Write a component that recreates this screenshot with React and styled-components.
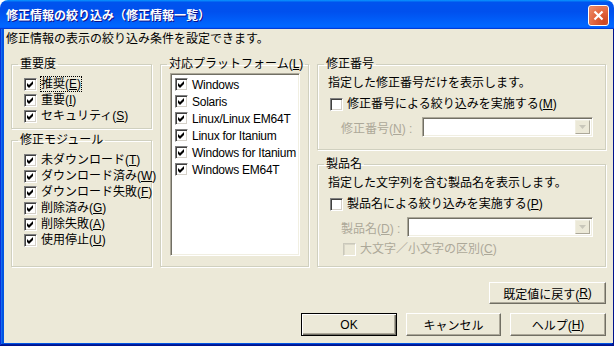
import styled, { createGlobalStyle, css } from "styled-components"

const GlobalStyle = createGlobalStyle`
  html, body {
    margin: 0;
    padding: 0;
    background: #fff;
  }
  body {
    font-family: "Liberation Sans", "Noto Sans CJK JP", sans-serif;
    font-size: 12px;
    color: #000;
  }
`

const sunken = css`
  border: 1px solid;
  border-color: #aca899 #fff #fff #aca899;
  box-shadow: inset 1px 1px #716f64, inset -1px -1px #f1efe2;
`

const Window = styled.div`
  width: 614px;
  height: 346px;
  display: flex;
  flex-direction: column;
  border-radius: 8px 8px 0 0;
  overflow: hidden;
`

const TitleBar = styled.div`
  height: 29px;
  flex: none;
  display: flex;
  justify-content: space-between;
  padding: 0 5px 0 6px;
  background: linear-gradient(180deg, #0997ff, #0053ee 8%, #0050ee 40%, #06f 88%, #06f 93%, #005bff 95%, #003dd7 96%, #003dd7);
`

const Title = styled.div`
  font-family: "Noto Sans CJK JP", sans-serif;
  font-weight: bold;
  font-size: 12px;
  line-height: 29px;
  color: #fff;
  text-shadow: 1px 1px #0f1089;
`

const CloseButton = styled.div`
  width: 21px;
  height: 21px;
  margin-top: 5px;
  box-sizing: border-box;
  border: 1px solid #fff;
  border-radius: 3px;
  background: radial-gradient(circle at 80% 85%, #cc4622, #e1633c 45%, #ec8a66 90%);
  box-shadow: inset 0 0 1px #b03a16;
  display: flex;
  align-items: center;
  justify-content: center;
`

const Frame = styled.div`
  flex: 1;
  display: flex;
  padding: 0 4px 3px 4px;
  background: #0054e3;
  box-shadow: inset -1px -1px #00138c, inset 1px 0 #0831d9, inset -2px -2px #001ea0, inset 2px 0 #166aee;
`

const Body = styled.div`
  flex: 1;
  background: #ece9d8;
  display: flex;
  flex-direction: column;
  padding-top: 3px;
`

const Desc = styled.div`
  line-height: 14px;
  padding: 0 ${p => p.$px ?? 2}px;
  white-space: nowrap;
`

const Columns = styled.div`
  display: grid;
  grid-template-columns: 141px 149px 289px;
  column-gap: 8px;
  margin-top: 11px;
  padding: 0 7px;
  height: 210px;
`

const Stack = styled.div`
  display: flex;
  flex-direction: column;
  gap: ${p => p.$gap}px;
`

const Group = styled.fieldset`
  margin: 0;
  padding: 0;
  min-width: 0;
  box-sizing: border-box;
  height: ${p => p.$h}px;
  border: 1px solid #d0d0bf;
  box-shadow: inset 1px 1px #fff, 1px 1px #fff;
`

const Legend = styled.legend`
  margin-left: 6px;
  padding: 0 2px;
  line-height: 14px;
  font-size: 12px;
`

const GroupInner = styled.div`
  padding: ${p => p.$pad};
  display: flex;
  flex-direction: column;
`

const Row = styled.label`
  display: flex;
  align-items: center;
  height: ${p => p.$h || 16}px;
  margin-top: ${p => p.$mt || 0}px;
  padding-left: ${p => p.$pl || 0}px;
  color: ${p => (p.$disabled ? "#aca899" : "#000")};
  white-space: nowrap;
`

const Box = styled.span`
  width: 13px;
  height: 13px;
  flex: none;
  box-sizing: border-box;
  background: ${p => (p.$disabled ? "#ece9d8" : "#fff")};
  border: 1px solid;
  border-color: ${p => (p.$disabled ? "#cac8bb #fff #fff #cac8bb" : "#808080 #fff #fff #808080")};
  box-shadow: ${p =>
    p.$disabled ? "inset 1px 1px #d8d5c6" : "inset 1px 1px #404040, inset -1px -1px #d4d0c8"};
  margin-right: 4px;
  display: flex;
`

const LabelText = styled.span`
  line-height: 14px;
  letter-spacing: ${p => p.$ls || 0}px;
  outline: ${p => (p.$focus ? "1px dotted #000" : "none")};
`

const ListBox = styled.div`
  width: 130px;
  height: 183px;
  box-sizing: border-box;
  background: #fff;
  padding: 2px 2px;
  ${sunken}
`

const Combo = styled.div`
  width: ${p => p.$w}px;
  height: 20px;
  box-sizing: border-box;
  background: #fff;
  display: flex;
  justify-content: flex-end;
  padding: 2px;
  ${sunken}
`

const ComboArrow = styled.div`
  width: 15px;
  height: 14px;
  box-sizing: border-box;
  background: #ece9d8;
  border: 1px solid;
  border-color: #f1efe2 #aca899 #aca899 #f1efe2;
  display: flex;
  align-items: center;
  justify-content: center;
`

const FieldRow = styled.div`
  display: flex;
  align-items: center;
  justify-content: space-between;
  height: 20px;
  margin-top: ${p => p.$mt}px;
  padding: 0 12px 0 23px;
  color: #aca899;
  white-space: nowrap;
`

const ButtonRow = styled.div`
  display: flex;
  justify-content: flex-end;
  gap: 9px;
  padding-right: 7px;
  margin-top: ${p => p.$mt}px;
`

const Button = styled.div`
  width: ${p => p.$w}px;
  height: ${p => p.$h}px;
  box-sizing: border-box;
  display: flex;
  align-items: center;
  justify-content: center;
  background: #ece9d8;
  white-space: nowrap;
  ${p =>
    p.$default
      ? css`
          border: 1px solid #000;
          box-shadow: inset 1px 1px #fff, inset -1px -1px #716f64, inset -2px -2px #aca899;
        `
      : css`
          border: 1px solid;
          border-color: #fff #716f64 #716f64 #fff;
          box-shadow: inset -1px -1px #aca899;
        `}
`

const Check = () => (
  <svg width="11" height="11" viewBox="0 0 11 11">
    <polygon points="2,4 4,6 8,2 8,5 4,9 2,7" fill="#000" />
  </svg>
)

const CheckItem = ({ label, acc, checked = true, disabled, focus, ...props }) => (
  <Row $disabled={disabled} {...props}>
    <Box $disabled={disabled}>{checked && <Check />}</Box>
    <LabelText $focus={focus}>
      {label}(<u>{acc}</u>)
    </LabelText>
  </Row>
)

const Arrow = () => (
  <svg width="7" height="4" viewBox="0 0 7 4">
    <polygon points="0,0 7,0 3.5,4" fill="#c9c7ba" />
  </svg>
)

const platforms = ["Windows", "Solaris", "Linux/Linux EM64T", "Linux for Itanium", "Windows for Itanium", "Windows EM64T"]

const PlainItem = ({ text }) => (
  <Row $h={17} $pl={2}>
    <Box>
      <Check />
    </Box>
    <LabelText $ls={-0.25}>{text}</LabelText>
  </Row>
)

export default function App() {
  return (
    <>
      <GlobalStyle />
      <Window>
        <TitleBar>
          <Title>修正情報の絞り込み（修正情報一覧）</Title>
          <CloseButton>
            <svg width="11" height="11" viewBox="0 0 11 11">
              <path d="M1.5 1.5 L9.5 9.5 M9.5 1.5 L1.5 9.5" stroke="#fff" strokeWidth="2.2" />
            </svg>
          </CloseButton>
        </TitleBar>
        <Frame>
          <Body>
            <Desc>修正情報の表示の絞り込み条件を設定できます。</Desc>
            <Columns>
              <Stack $gap={4}>
                <Group $h={72}>
                  <Legend>重要度</Legend>
                  <GroupInner $pad="5px 0 0 12px">
                    <CheckItem label="推奨" acc="E" focus />
                    <CheckItem label="重要" acc="I" />
                    <CheckItem label="セキュリティ" acc="S" />
                  </GroupInner>
                </Group>
                <Group $h={134}>
                  <Legend>修正モジュール</Legend>
                  <GroupInner $pad="5px 0 0 12px">
                    <CheckItem label="未ダウンロード" acc="T" />
                    <CheckItem label="ダウンロード済み" acc="W" />
                    <CheckItem label="ダウンロード失敗" acc="F" />
                    <CheckItem label="削除済み" acc="G" />
                    <CheckItem label="削除失敗" acc="A" />
                    <CheckItem label="使用停止" acc="U" />
                  </GroupInner>
                </Group>
              </Stack>
              <Group $h={210}>
                <Legend>
                  対応プラットフォーム(<u>L</u>)
                </Legend>
                <GroupInner $pad="2px 0 0 9px">
                  <ListBox>
                    {platforms.map(p => (
                      <PlainItem key={p} text={p} />
                    ))}
                  </ListBox>
                </GroupInner>
              </Group>
              <Stack $gap={7}>
                <Group $h={93}>
                  <Legend>修正番号</Legend>
                  <GroupInner $pad="5px 0 0 10px">
                    <Desc $px={0}>指定した修正番号だけを表示します。</Desc>
                    <CheckItem label="修正番号による絞り込みを実施する" acc="M" checked={false} $mt={6} $pl={2} />
                  </GroupInner>
                  <FieldRow $mt={5}>
                    <span>
                      修正番号(<u>N</u>) :
                    </span>
                    <Combo $w={171}>
                      <ComboArrow>
                        <Arrow />
                      </ComboArrow>
                    </Combo>
                  </FieldRow>
                </Group>
                <Group $h={110}>
                  <Legend>製品名</Legend>
                  <GroupInner $pad="5px 0 0 10px">
                    <Desc $px={0}>指定した文字列を含む製品名を表示します。</Desc>
                    <CheckItem label="製品名による絞り込みを実施する" acc="P" checked={false} $mt={6} $pl={2} />
                  </GroupInner>
                  <FieldRow $mt={5}>
                    <span>
                      製品名(<u>D</u>) :
                    </span>
                    <Combo $w={186}>
                      <ComboArrow>
                        <Arrow />
                      </ComboArrow>
                    </Combo>
                  </FieldRow>
                  <GroupInner $pad="0 0 0 10px">
                    <CheckItem label="大文字／小文字の区別" acc="C" checked={false} disabled $mt={4} $pl={15} />
                  </GroupInner>
                </Group>
              </Stack>
            </Columns>
            <ButtonRow $mt={15}>
              <Button $w={117} $h={22}>
                既定値に戻す(<u>R</u>)
              </Button>
            </ButtonRow>
            <ButtonRow $mt={9}>
              <Button $w={96} $h={23} $default>
                OK
              </Button>
              <Button $w={95} $h={23}>
                キャンセル
              </Button>
              <Button $w={96} $h={23}>
                ヘルプ(<u>H</u>)
              </Button>
            </ButtonRow>
          </Body>
        </Frame>
      </Window>
    </>
  )
}
